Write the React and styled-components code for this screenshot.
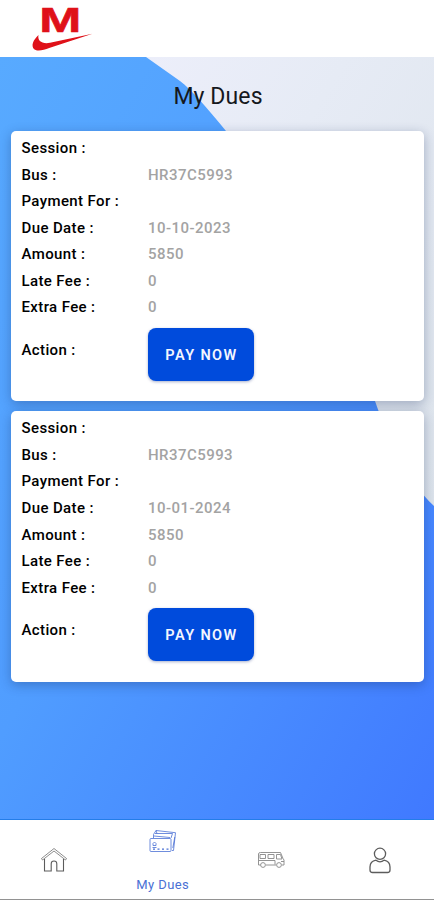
import React from 'react';
import styled, { createGlobalStyle } from 'styled-components';

const GlobalStyle = createGlobalStyle`
  * {
    box-sizing: border-box;
  }

  body {
    margin: 0;
    background: #fff;
    font-family: Roboto, 'Liberation Sans', sans-serif;
  }
`;

const Page = styled.div`
  display: flex;
  flex-direction: column;
  height: 900px;
  overflow: hidden;
`;

const Header = styled.header`
  flex: none;
  height: 57px;
  padding-left: 30px;
  background: #fff;
`;

const LogoLetter = styled.text`
  font-family: 'Liberation Sans', sans-serif;
  font-size: 35px;
  font-weight: 700;
`;

const Content = styled.main`
  position: relative;
  flex: 1;
  padding: 0 10px 0 11px;
  background: linear-gradient(120deg, #58aaff 0%, #509dff 45%, #4079ff 100%);
`;

const Backdrop = styled.svg`
  position: absolute;
  top: 0;
  left: 0;
`;

const Title = styled.h1`
  position: relative;
  height: 74px;
  margin: 0;
  padding: 3px 0 0 1px;
  color: #15181d;
  font-size: 23px;
  font-weight: 400;
  line-height: 73px;
  letter-spacing: 0.1px;
  text-align: center;
`;

const CardList = styled.div`
  position: relative;
  display: flex;
  flex-direction: column;
  gap: 10px;
`;

const Card = styled.section`
  height: 270.3px;
  padding: 3.8px 10.5px;
  background: #fff;
  border-radius: 5px;
  box-shadow: 0 3px 12px rgba(20, 40, 90, 0.32);
`;

const Row = styled.div`
  display: grid;
  grid-template-columns: 126.5px 1fr;
  align-items: center;
  height: ${(p) => (p.$tall ? '58px' : '26.55px')};
`;

const Label = styled.span`
  color: #000;
  font-size: 15px;
  font-weight: 500;
  letter-spacing: 0.38px;
  white-space: nowrap;
`;

const Value = styled.span`
  color: #a3a3a3;
  font-size: 15px;
  font-weight: 500;
  letter-spacing: 0.45px;
`;

const PayButton = styled.button`
  display: block;
  width: 106px;
  height: 52.5px;
  margin: 7.5px 0 -2px;
  padding: 2px 0 0 1px;
  border: none;
  border-radius: 8px;
  background: #004bdc;
  color: #f4f6ff;
  box-shadow: 0 1px 3px rgba(0, 30, 110, 0.35);
  font-family: inherit;
  font-size: 14.5px;
  font-weight: 600;
  letter-spacing: 1.4px;
`;

const TabBar = styled.nav`
  display: grid;
  grid-template-columns: repeat(4, 1fr);
  flex: none;
  height: 81px;
  border-top: 1px solid #247de8;
  border-bottom: 1px solid #929292;
  background: #fff;
`;

const Tab = styled.a`
  display: flex;
  flex-direction: column;
  align-items: center;
  justify-content: ${(p) => (p.$active ? 'flex-start' : 'center')};
  padding-top: ${(p) => (p.$active ? '9px' : '0')};
  color: ${(p) => (p.$active ? '#4a70d4' : '#5c5c5c')};
`;

const TabLabel = styled.span`
  margin-top: 24px;
  font-size: 13px;
  line-height: 16px;
  letter-spacing: 0.4px;
`;

const Logo = () => (
  <svg width='64' height='52' viewBox='0 -6 64 52' fill='#df1119'>
    <LogoLetter
      x='9.2'
      y='26.2'
      textLength='42'
      lengthAdjust='spacingAndGlyphs'
      stroke='#df1119'
      strokeWidth='.6'
    >
      M
    </LogoLetter>
    <path d='M8.5 29C3 34 .8 40 4.2 43.2c3 2.5 9.500 1 15-1.200L62.500 27.800 20 36.800c-8 1.500-12.800-2-11.500-7.800Z' />
  </svg>
);

const HomeIcon = () => (
  <svg width='28' height='26' viewBox='0 0 28 26' fill='none' stroke='currentColor'>
    <path d='M1.500 11.500 14 1.500l12.500 10-1 1.500L14 4 2.500 13Z' strokeWidth='.7' />
    <path d='M4.500 12v12h6.700v-7.200a2.800 2.800 0 0 1 5.600 0V24h6.700V12' strokeWidth='1.100' />
  </svg>
);

const CardsIcon = () => (
  <svg width='28' height='24' viewBox='0 0 28 24' fill='none' stroke='currentColor' strokeWidth='.8'>
    <path d='M4.500 9V5.500L7 1.500l19.500 2.200-2 17.800H23' />
    <path d='M6 4.500h17.500L22 9M5 7l16 1.500M7 1.500l1 3M25.800 8l-2 11' />
    <rect x='1' y='9.500' width='21' height='13' rx='1' />
    <path d='M4 16.500v-2l1.500-1.500L7 14.500v2ZM3.500 18.500h4' />
    <path d='M4 20.200h16' strokeWidth='1.200' strokeDasharray='2 2.500' />
  </svg>
);

const BusIcon = () => (
  <svg width='28' height='18' viewBox='0 0 28 18' fill='none' stroke='#888' strokeWidth='.9'>
    <path d='M3.500 14H1.500V3q0-1.500 2-1.500h20l2.500 6 1 1.500v5h-2M9 14h10' />
    <path d='M3 3.500h5.500v4H3ZM11 3.500h6v4h-6ZM19.500 3.500h4L25 8h-5.500ZM2 9.500h16v4M24 10.500h3' />
    <circle cx='6' cy='14' r='2.400' />
    <circle cx='22' cy='14' r='2.400' />
  </svg>
);

const UserIcon = () => (
  <svg width='24' height='28' viewBox='0 0 24 28' fill='none' stroke='currentColor' strokeWidth='1.300'>
    <circle cx='12' cy='7.800' r='5.600' />
    <path d='M8 14.200C4 15 2 17.500 2 21v3q0 2.500 2.500 2.500h15Q22 26.500 22 24v-3c0-3.500-2-6-6-6.800q-4 3.300-8 0Z' />
  </svg>
);

const dues = [
  { bus: 'HR37C5993', dueDate: '10-10-2023', amount: 5850, lateFee: 0, extraFee: 0 },
  { bus: 'HR37C5993', dueDate: '10-01-2024', amount: 5850, lateFee: 0, extraFee: 0 },
];

const Field = ({ label, value }) => (
  <Row>
    <Label>{label} :</Label>
    <Value>{value}</Value>
  </Row>
);

const DueCard = ({ due }) => (
  <Card>
    <Field label='Session' />
    <Field label='Bus' value={due.bus} />
    <Field label='Payment For' />
    <Field label='Due Date' value={due.dueDate} />
    <Field label='Amount' value={due.amount} />
    <Field label='Late Fee' value={due.lateFee} />
    <Field label='Extra Fee' value={due.extraFee} />
    <Row $tall>
      <Label>Action :</Label>
      <PayButton>PAY NOW</PayButton>
    </Row>
  </Card>
);

export default function App() {
  return (
    <>
      <GlobalStyle />
      <Page>
        <Header>
          <Logo />
        </Header>
        <Content>
          <Backdrop width='434' height='762' viewBox='0 0 434 762'>
            <defs>
              <linearGradient id='haze' x1='0' y1='0' x2='1' y2='1'>
                <stop offset='0' stopColor='#eceefa' />
                <stop offset='.35' stopColor='#e6ebf5' />
                <stop offset='1' stopColor='#dce3eb' />
              </linearGradient>
            </defs>
            <path
              d='M146 0L180 24C192 33 207 51 226 74C280 145 335 253 375 344C386 376 408 425 434 449V0Z'
              fill='url(#haze)'
            />
          </Backdrop>
          <Title>My Dues</Title>
          <CardList>
            {dues.map((due) => (
              <DueCard key={due.dueDate} due={due} />
            ))}
          </CardList>
        </Content>
        <TabBar>
          <Tab>
            <HomeIcon />
          </Tab>
          <Tab $active>
            <CardsIcon />
            <TabLabel>My Dues</TabLabel>
          </Tab>
          <Tab>
            <BusIcon />
          </Tab>
          <Tab>
            <UserIcon />
          </Tab>
        </TabBar>
      </Page>
    </>
  );
}
